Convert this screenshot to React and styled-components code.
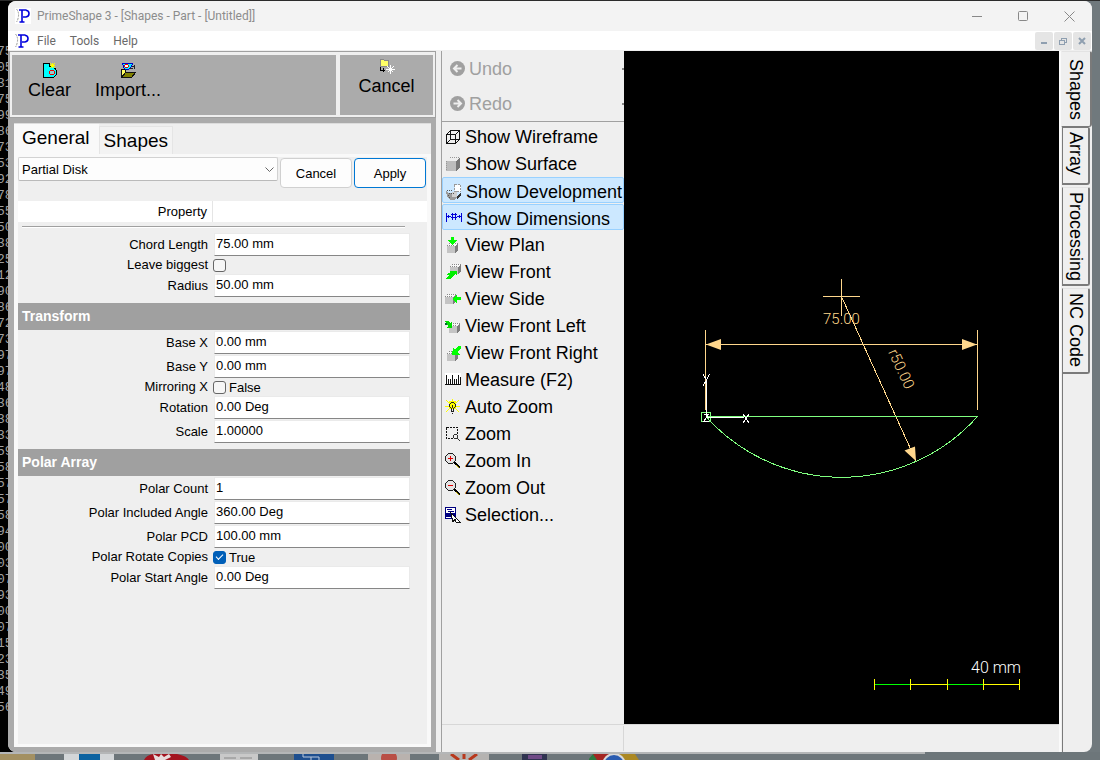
import { useState } from "react";
import styled, { createGlobalStyle, css } from "styled-components";

const GlobalStyle = createGlobalStyle`
  * {
    box-sizing: border-box;
  }
  body {
    margin: 0;
    background: #70797d;
    font-family: "Liberation Sans", Arial, sans-serif;
    color: #000;
  }
  button, input, select {
    font-family: inherit;
    color: inherit;
    margin: 0;
  }
`;

const Desktop = styled.div`
  height: 100vh;
  display: flex;
  flex-direction: column;
  border-top: 1px solid #2b2b2b;
  overflow: hidden;
`;

const DesktopRow = styled.div`
  flex: 1;
  min-height: 0;
  display: flex;
  background: linear-gradient(to right, #000 50%, #70797d 50%);
`;

const Console = styled.div`
  flex: 0 0 8px;
  height: 732px;
  padding-top: 43px;
  overflow: hidden;
  background: #000;
  color: #a0a0a0;
  font-family: "Liberation Mono", monospace;
  font-size: 13px;
  line-height: 16px;
  text-indent: -3px;
  white-space: nowrap;
`;

const Window = styled.div`
  flex: 1;
  min-width: 0;
  display: flex;
  flex-direction: column;
  background: #efefef;
  border-radius: 8px;
  overflow: hidden;
`;

const WallEdge = styled.div`
  flex: 0 0 8px;
  background: #70797d;
`;

const TitleBar = styled.header`
  flex: 0 0 30px;
  display: flex;
  align-items: center;
  padding-left: 7px;
  background: #f3f3f3;
  color: #8c8c8c;
  font-family: Roboto, "Open Sans", sans-serif;
  font-size: 12px;
`;

const TitleText = styled.span`
  flex: 1;
  padding-left: 6px;
`;

const CaptionButton = styled.button`
  width: 46px;
  height: 30px;
  padding: 0;
  border: none;
  background: none;
  display: grid;
  place-items: center;
`;

const MenuBar = styled.nav`
  flex: 0 0 20px;
  display: flex;
  align-items: center;
  padding-left: 6px;
  background: #fff;
  border-bottom: 1px solid #efefef;
  font-family: Roboto, "Open Sans", sans-serif;
`;

const MenuItem = styled.button`
  padding: 0 7px;
  border: none;
  background: none;
  color: #6a6a6a;
  font-size: 12px;
  line-height: 18px;
`;

const Spacer = styled.div`
  flex: 1;
`;

const ChildButton = styled.button`
  width: 18px;
  height: 18px;
  margin-right: 1px;
  padding: 0;
  border: none;
  border-radius: 2px;
  background: #e5e5e5;
  display: grid;
  place-items: center;
`;

const Body = styled.div`
  flex: 1;
  min-height: 0;
  display: flex;
`;

const Dock = styled.aside`
  flex: 0 0 428px;
  display: flex;
  flex-direction: column;
  background: #ababab;
`;

const ActionBar = styled.div`
  height: 67px;
  display: flex;
  gap: 4px;
  padding: 3px 2px 2px;
  background: #efefef;
  border: 1px solid #a0a0a0;
  margin-left: 1px;
`;

const ActionGroup = styled.div`
  flex: ${(p) => (p.$grow ? "1" : "0 0 93px")};
  display: flex;
  justify-content: ${(p) => (p.$grow ? "flex-start" : "center")};
  gap: 8px;
  padding: ${(p) => (p.$grow ? "7px 8px 0" : "3px 0 0")};
  background: #ababab;
`;

const ActionButton = styled.button`
  display: flex;
  flex-direction: column;
  align-items: center;
  align-self: flex-start;
  gap: 1px;
  padding: 0 8px;
  border: none;
  background: none;
  font-size: 18px;
  line-height: 22px;
`;

const DockPage = styled.div`
  flex: 1;
  margin: 5px 5px 5px 6px;
  background: #efefef;
  border-top: 1px solid #dcdcdc;
  display: flex;
  flex-direction: column;
`;

const TabStrip = styled.div`
  display: flex;
  align-items: flex-end;
  height: 30px;
`;

const Tab = styled.button`
  height: ${(p) => (p.$active ? 30 : 28)}px;
  padding: ${(p) => (p.$active ? "0 8px 4px 7px" : "0 4px")};
  background: ${(p) => (p.$active ? "#f9f9f9" : "#f3f3f3")};
  border: 1px solid ${(p) => (p.$active ? "#f9f9f9" : "#e5e5e5")};
  border-bottom: none;
  font-size: 19px;
  line-height: 24px;
`;

const TabPage = styled.div`
  flex: 1;
  border: 3px solid #f9f9f9;
  border-right-width: 4px;
  border-left-width: 4px;
  display: flex;
  flex-direction: column;
`;

const ShapeRow = styled.div`
  display: flex;
  align-items: flex-start;
  gap: 2px;
  padding-right: 1px;
`;

const SelectWrap = styled.div`
  flex: 1;
  position: relative;
`;

const Select = styled.select`
  appearance: none;
  width: 100%;
  height: 24px;
  padding: 0 3px;
  border: 1px solid #d2d2d2;
  border-bottom-color: #bababa;
  border-radius: 2px;
  background: #fdfdfd;
  font-size: 13px;
`;

const Chevron = styled.svg`
  position: absolute;
  right: 4px;
  top: 10px;
  pointer-events: none;
`;

const PushButton = styled.button`
  width: 72px;
  height: 30px;
  margin-top: 1px;
  padding: 0;
  border: 1px solid ${(p) => (p.$primary ? "#0078d4" : "#d0d0d0")};
  border-radius: 4px;
  background: #fdfdfd;
  font-size: 13px;
`;

const GridHeader = styled.div`
  height: 21px;
  margin-top: 13px;
  display: flex;
  background: #fff;
  font-size: 13px;
  line-height: 21px;
`;

const GridHeaderName = styled.span`
  width: 195px;
  padding-right: 5px;
  text-align: right;
  border-right: 1px solid #e5e5e5;
`;

const Rule = styled.div`
  height: 2px;
  margin: 4px 22px 5px 4px;
  background: #fff;
  border-top: 1px solid #a0a0a0;
`;

const Properties = styled.div`
  padding-right: 17px;
  font-size: 13px;
`;

const SectionTitle = styled.h2`
  height: 27px;
  margin: 5px 0 1px;
  padding-left: 4px;
  background: #a0a0a0;
  color: #fff;
  font-size: 14px;
  line-height: 27px;
`;

const Property = styled.div`
  display: grid;
  grid-template-columns: 190px 1fr;
  column-gap: 6px;
  align-items: center;
  height: ${(p) => (p.$check ? 17 : 24)}px;
`;

const PropertyLabel = styled.label`
  padding-bottom: 2px;
  text-align: right;
  white-space: nowrap;
`;

const TextField = styled.input`
  width: 100%;
  height: 23px;
  margin-bottom: 1px;
  padding: 0 1px 2px;
  border: 1px solid #eaeaea;
  border-bottom-color: #868686;
  background: #fff;
  font-size: 13px;
  outline: none;
`;

const CheckCell = styled.div`
  display: flex;
  align-items: center;
  gap: 3px;
  margin-left: -1px;
  padding-bottom: 1px;
`;

const CheckBox = styled.input`
  appearance: none;
  width: 13px;
  height: 13px;
  border: 1px solid #666;
  border-radius: 3px;
  background: #f6f6f6;
  display: grid;
  place-items: center;

  &:checked {
    background: #005fb8;
    border-color: #005fb8;
  }
  &:checked::after {
    content: "";
    width: 6px;
    height: 3px;
    margin-bottom: 2px;
    border-left: 1px solid #fff;
    border-bottom: 1px solid #fff;
    transform: rotate(-45deg);
  }
`;

const Work = styled.main`
  flex: 1;
  min-width: 0;
  margin-left: 5px;
  border-left: 1px solid #a0a0a0;
  display: flex;
  flex-direction: column;
`;

const WorkRow = styled.div`
  flex: 1;
  min-height: 0;
  display: flex;
`;

const ToolBar = styled.div`
  flex: 0 0 182px;
  display: flex;
  flex-direction: column;
`;

const HistoryGroup = styled.div`
  height: 71px;
  border-bottom: 1px solid #a0a0a0;
  margin-bottom: 1px;
`;

const HistoryButton = styled.button`
  width: 100%;
  height: 35px;
  display: flex;
  align-items: center;
  gap: 4px;
  padding: 0 0 0 8px;
  border: none;
  background: none;
  color: #a0a0a0;
  font-size: 18px;
  line-height: 22px;
`;

const DropTick = styled.i`
  width: 2px;
  height: 2px;
  margin-left: auto;
  background: #888;
`;

const ToolButton = styled.button`
  height: 27px;
  display: flex;
  align-items: center;
  gap: 4px;
  padding: 0 0 0 3px;
  border: none;
  background: none;
  font-size: 18px;
  line-height: 22px;
  white-space: nowrap;

  ${(p) =>
    p.$pressed &&
    css`
      height: 26px;
      margin-bottom: 1px;
      padding-top: 3px;
      border: 1px solid #99d1ff;
      border-radius: 2px;
      background: #cce8ff;
    `}
`;

const Viewport = styled.div`
  flex: 1;
  min-width: 0;
  background: #000;
`;

const StatusBar = styled.footer`
  flex: 0 0 28px;
  display: flex;
  padding: 1px 0;
  border-top: 1px solid #d7d7d7;
`;

const StatusPane = styled.div`
  width: 182px;
  border-right: 1px solid #d7d7d7;
`;

const SideTabs = styled.div`
  flex: 0 0 33px;
  display: flex;
  flex-direction: column;
  border-left: 2px solid #fafafa;
`;

const SideTab = styled.button`
  writing-mode: vertical-rl;
  flex: none;
  display: flex;
  align-items: center;
  justify-content: flex-start;
  height: ${(p) => p.$size}px;
  width: 28px;
  padding: ${(p) => (p.$active ? "7px 0" : "4px 0")};
  margin: ${(p) => (p.$active ? "0" : "0 0 2px 1px")};
  border: 1px solid #7a7a7a;
  border-width: 1px 2px 2px 1px;
  border-top-color: ${(p) => (p.$after ? "#7a7a7a" : "#e3e3e3")};
  border-radius: 0 2px 3px 0;
  background: #efefef;
  font-size: 18px;
  line-height: 20px;
  white-space: nowrap;

  ${(p) =>
    p.$active &&
    css`
      width: 31px;
      border-left-color: #efefef;
      border-bottom-width: 1px;
    `}
`;

const SideRail = styled.div`
  flex: 1;
  margin: -2px 0 0 1px;
  border-left: 1px solid #7a7a7a;
`;

const TaskStrip = styled.div`
  flex: 0 0 8px;
  display: flex;
  overflow: hidden;
  background: #6d767a;
  border-top: 2px solid #aeb0b1;
  border-image: linear-gradient(to right, #b4b6b7 84%, #6d767a 84%) 1;
`;

const TaskSlot = styled.div`
  flex: 0 0 75px;
  display: flex;
  justify-content: center;

  &:first-child {
    margin-left: -24px;
  }
`;

const Crisp = ({ size = 16, children }) => (
  <svg
    width={size}
    height={size}
    viewBox={`0 0 ${size} ${size}`}
    shapeRendering="crispEdges"
    fill="none"
    aria-hidden="true"
  >
    {children}
  </svg>
);

const AppIcon = () => (
  <svg width="16" height="16" viewBox="0 0 16 16" fill="none" aria-hidden="true">
    <rect width="16" height="16" fill="#fff" />
    <path d="M1.500 1q2.500 3 2 7q-.5 4-2 6" stroke="#999" strokeDasharray="2 1" />
    <path
      d="M4 2h7.500M7 2v12M4.500 14h5M11 2.200q3 .3 3 3.300t-3 3.500H8"
      stroke="#0000dc"
      strokeWidth="1.600"
    />
  </svg>
);

const Cube = ({ x = 3, y = 5 }) => (
  <g transform={`translate(${x} ${y})`}>
    <path d="M0 3l3-3h8l-3 3z" fill="#f8f8f8" />
    <path d="M0 3h8v7H0z" fill="#c4c4c4" />
    <path d="M8 3l3-3v7l-3 3z" fill="#7c7c7c" />
    <path d="M0 2.500h8M2 .5h9" stroke="#888" strokeDasharray="1 1" />
  </g>
);

const Lens = ({ plus }) => (
  <Crisp>
    <path d="M3 1h5l2 2v5l-2 2H3L1 8V3z" fill="#e4e4e4" />
    <path
      d="M3.500.5h4M3.500 10.500h4M.5 3.500v4M10.500 3.500v4M1.500 2.500l1-1M8.500 1.500l1 1M1.500 8.500l1 1M9.500 8.500l-1 1"
      stroke="#222"
      strokeLinecap="square"
    />
    <path d={plus ? "M5.500 3v5M3 5.500h5" : "M3 5.500h5"} stroke="#e00000" />
    <path d="M9.500 9.500l5.500 5.500" stroke="#000" strokeWidth="2.500" />
    <path d="M11 12l3 3" stroke="#c8b400" />
  </Crisp>
);

const icons = {
  wireframe: (
    <Crisp>
      <path d="M1.500 5.500h9v9h-9zM5.500 1.500h9v9h-9zM1.500 5.500l4-4M10.500 5.500l4-4M1.500 14.500l4-4M10.500 14.500l4-4" stroke="#111" />
    </Crisp>
  ),
  surface: (
    <Crisp>
      <path d="M1 5l4-4h10l-4 4z" fill="#eee" />
      <path d="M1 5h10v10H1z" fill="#bdbdbd" />
      <path d="M11 5l4-4v10l-4 4z" fill="#777" />
      <path d="M5 1.500h10M1.500 5v10" stroke="#999" strokeDasharray="1 1" />
    </Crisp>
  ),
  development: (
    <Crisp>
      <path d="M8.500.5h6v7h-6z" fill="#fff" stroke="#999" strokeDasharray="2 1" />
      <path d="M0 7l3 2h3l2-2h3v6l-3 3H4l-3-3z" fill="#9a9a9a" />
      <path d="M6 8h5v5H6z" fill="#d0d0d0" />
      <path d="M11 13l4-5v3l-4 5z" fill="#333" />
      <path d="M1 6.500h5M3 9.500h5M2 11.500l3 3" stroke="#555" strokeDasharray="1 1" />
    </Crisp>
  ),
  dimensions: (
    <Crisp>
      <path
        d="M.5 2v9M15.500 2v9M1 5.500h4M11 5.500h4M2.500 4v3M13.500 4v3M6.500 2v7M9.500 2v7M5 3.500h6M5 6.500h6"
        stroke="#0000d8"
      />
    </Crisp>
  ),
  plan: (
    <Crisp>
      <Cube x={2} y={6} />
      <path d="M6 0h3v3h3l-4.500 5L3 3h3z" fill="#0f0" />
    </Crisp>
  ),
  front: (
    <Crisp>
      <Cube x={5} y={0} />
      <path d="M4 7h8v4l-2-1-3 4-2 1H1l3-4H1l5-3z" fill="#0e0" />
    </Crisp>
  ),
  side: (
    <Crisp>
      <Cube x={0} y={3} />
      <path d="M8 8l4-5v3h4v3h-4v4z" fill="#0f0" />
    </Crisp>
  ),
  frontLeft: (
    <Crisp>
      <Cube x={4} y={5} />
      <path d="M0 3h3l2 2 2-2v7H1l2-2z" fill="#0d0" />
      <path d="M0 5h2v2H0z" fill="#063" />
    </Crisp>
  ),
  frontRight: (
    <Crisp>
      <Cube x={2} y={6} />
      <path d="M8 3l2 1 4-3h2v2l-3 4 2 3H7z" fill="#0f0" />
    </Crisp>
  ),
  measure: (
    <Crisp>
      <path d="M0 1h16v12H0z" fill="#fff" />
      <path d="M0 12.500h16M1.500 3v9M3.500 7v5M5.500 7v5M7.500 3v9M9.500 7v5M11.500 7v5M13.500 3v9M15.500 5v7" stroke="#111" />
    </Crisp>
  ),
  bulb: (
    <Crisp>
      <path d="M4 2h7v8H4z" fill="#ff0" />
      <path d="M1 1l13 12M14 1L1 13M7.500 0v3M0 7.500h15" stroke="#ff0" />
      <path
        d="M6 3.500h3M4.500 5v3M10.500 5v3M5 4.500h1M9 4.500h1M5 8.500h1M9 8.500h1M6.500 9v3M8.500 9v3M6 12.500h3M7 14.500h1M7.500 6v3"
        stroke="#222"
      />
    </Crisp>
  ),
  zoom: (
    <Crisp>
      <path d="M1.500 1.500h11v11h-11z" stroke="#111" strokeDasharray="2 1" />
      <path d="M8 8h5v5H8z" fill="#efefef" />
      <path d="M9.500 8.500h2l1 1v2l-1 1h-2l-1-1v-2zM12 12l3.500 3.500" stroke="#333" />
    </Crisp>
  ),
  zoomIn: <Lens plus />,
  zoomOut: <Lens />,
  selection: (
    <Crisp>
      <path d="M.5.5h10v11H.5z" fill="#fff" stroke="#000080" />
      <path d="M2 2.500h5M3 4.500h6" stroke="#000080" />
      <path d="M1 6h9v4H1z" fill="#000080" />
      <path d="M6 6l9 9h-4l-1-3-2 3z" fill="#fff" stroke="#111" />
    </Crisp>
  ),
};

const ClearIcon = () => (
  <Crisp>
    <path d="M1.500 1.500h6v3h4l3 4v4l-3 3h-10z" fill="#0ff" stroke="#000" />
    <circle cx="10" cy="10.500" r="2.500" fill="#9cc" stroke="#e00" />
    <path d="M8 3.500h5M10.500 1v5M8 1l5 5M13 1L8 6" stroke="#ff0" />
  </Crisp>
);

const ImportIcon = () => (
  <Crisp>
    <path d="M2.500 1.500h10l-1 3-3 3h-4z" fill="#0ff" stroke="#00c" />
    <circle cx="6.500" cy="4" r="1.800" fill="#fff" stroke="#e00" />
    <path d="M1.500 7.500h3l2 3v5h-5z" fill="#ffff66" stroke="#111" />
    <path d="M5.500 10.500h10l-4 5h-10z" fill="#808000" stroke="#111" />
    <path d="M10 6.500h3M14.500 3v4M12 4.500h2" stroke="#222" />
  </Crisp>
);

const LeaveIcon = () => (
  <Crisp>
    <path d="M1 3V1h3l1 1h4v6H1z" fill="#ff6" stroke="#888" />
    <path d="M1.500 9v3H6M4.500 10v4" stroke="#000" />
    <path d="M7 11.500h9M11.500 7v9M8.500 8.500l6 6M14.500 8.500l-6 6" stroke="#fff" />
  </Crisp>
);

const HistoryIcon = ({ flip }) => (
  <svg width="15" height="15" viewBox="0 0 15 15" fill="none" aria-hidden="true">
    <circle cx="7.500" cy="7.500" r="7.500" fill="#a0a0a0" />
    <path
      d={flip ? "M3.500 7.500h7M7.500 4l3.500 3.500L7.500 11" : "M11.500 7.500h-7M7.500 4L4 7.500 7.500 11"}
      stroke="#efefef"
      strokeWidth="2"
    />
  </svg>
);

const tools = [
  ["wireframe", "Show Wireframe"],
  ["surface", "Show Surface"],
  ["development", "Show Development", true],
  ["dimensions", "Show Dimensions", true],
  ["plan", "View Plan"],
  ["front", "View Front"],
  ["side", "View Side"],
  ["frontLeft", "View Front Left"],
  ["frontRight", "View Front Right"],
  ["measure", "Measure (F2)"],
  ["bulb", "Auto Zoom"],
  ["zoom", "Zoom"],
  ["zoomIn", "Zoom In"],
  ["zoomOut", "Zoom Out"],
  ["selection", "Selection..."],
];

const sections = [
  {
    rows: [
      { label: "Chord Length", value: "75.00 mm" },
      { label: "Leave biggest", checked: false, text: "" },
      { label: "Radius", value: "50.00 mm" },
    ],
  },
  {
    title: "Transform",
    rows: [
      { label: "Base X", value: "0.00 mm" },
      { label: "Base Y", value: "0.00 mm" },
      { label: "Mirroring X", checked: false, text: "False" },
      { label: "Rotation", value: "0.00 Deg" },
      { label: "Scale", value: "1.00000" },
    ],
  },
  {
    title: "Polar Array",
    rows: [
      { label: "Polar Count", value: "1" },
      { label: "Polar Included Angle", value: "360.00 Deg" },
      { label: "Polar PCD", value: "100.00 mm" },
      { label: "Polar Rotate Copies", checked: true, text: "True" },
      { label: "Polar Start Angle", value: "0.00 Deg" },
    ],
  },
];

const consoleLines =
  "75 05 31 75 99 86 73 53 92 78 55 50 38 25 12 90 86 72 73 97 97 48 36 38 33 59 58 57 57 58 94 00 03 07 93 00 07 15 23 35 49 56".split(" ");

const PropertyRow = ({ row }) => {
  const id = row.label.toLowerCase().replace(/ /g, "-");
  const isCheck = row.checked !== undefined;
  return (
    <Property $check={isCheck}>
      <PropertyLabel htmlFor={id}>{row.label}</PropertyLabel>
      {isCheck ? (
        <CheckCell>
          <CheckBox type="checkbox" id={id} defaultChecked={row.checked} />
          {row.text}
        </CheckCell>
      ) : (
        <TextField type="text" id={id} defaultValue={row.value} />
      )}
    </Property>
  );
};

const Drawing = () => (
  <svg width="100%" height="100%" viewBox="624 51 435 673" fill="none" role="img" aria-label="Partial disk">
    <g stroke="#ffd78c" shapeRendering="crispEdges">
      <path d="M841.500 279v37M823 296.500h37M705.500 330v80M977.500 330v80M706 344.500h271" />
    </g>
    <path d="M841.500 296.500L916 461" stroke="#ffd78c" shapeRendering="crispEdges" />
    <path d="M706 344.500l15-5.500v11zM977 344.500l-15-5.500v11zM916 461l-11.500-10.500 10.500-4z" fill="#ffd78c" />
    <g stroke="#80ff80" shapeRendering="crispEdges">
      <path d="M706 416.500h271M701.500 412.500h9v9h-9z" />
      <path d="M706 416.500A182 182 0 0 0 977.500 416.500" />
    </g>
    <g stroke="#fff" shapeRendering="crispEdges">
      <path d="M706.500 379v38M706 417.500h38" />
      <path d="M703 374l3.500 6 3-6M706.500 380l-3.500 6M743 414l6 9M749 414l-6 9M703.500 414.500h5l-5 7h5" />
    </g>
    <g fill="#ffd78c" fontFamily="Roboto, sans-serif" fontWeight="300">
      <text x="823" y="324" fontSize="15">75.00</text>
      <text transform="translate(888 352) rotate(65.500)" fontSize="15">r50.00</text>
    </g>
    <text x="971" y="673" fill="#fff" fontFamily="Roboto, sans-serif" fontWeight="300" fontSize="16">40 mm</text>
    <g shapeRendering="crispEdges">
      <path d="M874 684.500h37M947 684.500h37" stroke="#0f0" />
      <path d="M911 684.500h36M984 684.500h36M874.500 679v11M910.500 679v11M947.500 679v11M983.500 679v11M1019.500 679v11" stroke="#ff0" />
    </g>
  </svg>
);

const taskIcons = [
  <path d="M0 0h46v6H0z" fill="#a39062" key="a" />,
  <path d="M0 0h50v6H0z M15 0h21v6H15z" fill="#d3d6d8" key="b" />,
  <path d="M5 6Q8-1 20 0h18q10 2 12 6z" fill="#a3141f" key="c" />,
  <path d="M6 0h38v6H6z" fill="#c9c9c9" key="d" />,
  <path d="M5 0h40v6H5z" fill="#1e4f8f" key="e" />,
  <path d="M4 0h42v6H4z" fill="#b9b2ae" key="f" />,
  <path d="M0 0h50v6H0z" fill="#b5b3b1" key="g" />,
  <path d="M8 0h25v6H8z" fill="#2f3350" key="h" />,
  <path d="M-1 6l5-6h18v6z" fill="#2d7a41" key="i" />,
];

const taskDetails = {
  1: <path d="M15 0h21v6H15z" fill="#0b62a0" />,
  2: <path d="M14 0l6 3 2-3 3 3 5-3 2 3-6 3H16z" fill="#e8dcdc" />,
  3: <path d="M10 4h12M26 4h12" stroke="#888" />,
  4: <path d="M14 0v3h8v3M30 6V3h-8" stroke="#b8c8dc" fill="none" />,
  5: <circle cx="25" cy="4" r="8" fill="#b94f46" />,
  6: <path d="M12 0l8 6M38 0l-8 6M25 0v5" stroke="#b8381c" strokeWidth="3" />,
  7: <path d="M14 1h14v4H14z" fill="#6f4a86" />,
  8: (
    <>
      <path d="M4 0h24v6H8z" fill="#a32622" />
      <path d="M27 0h19l4 6H27z" fill="#ab8823" />
      <circle cx="25" cy="11" r="12" fill="#d8d8d8" />
      <circle cx="25" cy="11" r="10" fill="#2a5cb0" />
    </>
  ),
};

const App = () => {
  const [shape, setShape] = useState("Partial Disk");

  return (
    <>
      <GlobalStyle />
      <Desktop>
        <DesktopRow>
          <Console>
            {consoleLines.map((line, i) => (
              <div key={i}>{line}</div>
            ))}
          </Console>
          <Window>
            <TitleBar>
              <AppIcon />
              <TitleText>PrimeShape 3 - [Shapes - Part - [Untitled]]</TitleText>
              <CaptionButton aria-label="Minimize">
                <Crisp size={11}>
                  <path d="M0 5.500h10" stroke="#888" />
                </Crisp>
              </CaptionButton>
              <CaptionButton aria-label="Maximize">
                <svg width="11" height="11" fill="none">
                  <rect x=".5" y=".5" width="9" height="9" rx="1" stroke="#888" />
                </svg>
              </CaptionButton>
              <CaptionButton aria-label="Close">
                <svg width="11" height="11" fill="none">
                  <path d="M.5.5l10 10M10.500.5l-10 10" stroke="#888" />
                </svg>
              </CaptionButton>
            </TitleBar>
            <MenuBar>
              <AppIcon />
              <MenuItem>File</MenuItem>
              <MenuItem>Tools</MenuItem>
              <MenuItem>Help</MenuItem>
              <Spacer />
              <ChildButton aria-label="Minimize document">
                <Crisp size={8}>
                  <path d="M1 5h6v2H1z" fill="#8f9fb0" />
                </Crisp>
              </ChildButton>
              <ChildButton aria-label="Restore document">
                <Crisp size={8}>
                  <path d="M2.500 3V1h5v4H6M.5 3.500h5v4h-5z" stroke="#8f9fb0" />
                </Crisp>
              </ChildButton>
              <ChildButton aria-label="Close document">
                <svg width="8" height="8" fill="none">
                  <path d="M1 1l6 6M7 1L1 7" stroke="#8f9fb0" strokeWidth="2" />
                </svg>
              </ChildButton>
            </MenuBar>
            <Body>
              <Dock>
                <ActionBar>
                  <ActionGroup $grow>
                    <ActionButton>
                      <ClearIcon />
                      Clear
                    </ActionButton>
                    <ActionButton>
                      <ImportIcon />
                      Import...
                    </ActionButton>
                  </ActionGroup>
                  <ActionGroup>
                    <ActionButton>
                      <LeaveIcon />
                      Cancel
                    </ActionButton>
                  </ActionGroup>
                </ActionBar>
                <DockPage>
                  <TabStrip>
                    <Tab $active>General</Tab>
                    <Tab>Shapes</Tab>
                  </TabStrip>
                  <TabPage>
                    <ShapeRow>
                      <SelectWrap>
                        <Select
                          aria-label="Shape"
                          value={shape}
                          onChange={(e) => setShape(e.target.value)}
                        >
                          <option>Partial Disk</option>
                        </Select>
                        <Chevron width="9" height="6" fill="none">
                          <path d="M.5.5l4 4 4-4" stroke="#666" />
                        </Chevron>
                      </SelectWrap>
                      <PushButton>Cancel</PushButton>
                      <PushButton $primary>Apply</PushButton>
                    </ShapeRow>
                    <GridHeader>
                      <GridHeaderName>Property</GridHeaderName>
                    </GridHeader>
                    <Rule />
                    <Properties>
                      {sections.map((section, i) => (
                        <section key={i}>
                          {section.title && <SectionTitle>{section.title}</SectionTitle>}
                          {section.rows.map((row) => (
                            <PropertyRow key={row.label} row={row} />
                          ))}
                        </section>
                      ))}
                    </Properties>
                  </TabPage>
                </DockPage>
              </Dock>
              <Work>
                <WorkRow>
                  <ToolBar>
                    <HistoryGroup>
                      <HistoryButton>
                        <HistoryIcon />
                        Undo
                        <DropTick />
                      </HistoryButton>
                      <HistoryButton>
                        <HistoryIcon flip />
                        Redo
                        <DropTick />
                      </HistoryButton>
                    </HistoryGroup>
                    {tools.map(([icon, label, pressed]) => (
                      <ToolButton key={label} $pressed={pressed}>
                        {icons[icon]}
                        {label}
                      </ToolButton>
                    ))}
                  </ToolBar>
                  <Viewport>
                    <Drawing />
                  </Viewport>
                </WorkRow>
                <StatusBar>
                  <StatusPane />
                </StatusBar>
              </Work>
              <SideTabs>
                <SideTab $size={76} $active>
                  Shapes
                </SideTab>
                <SideTab $size={58} $after>
                  Array
                </SideTab>
                <SideTab $size={99}>Processing</SideTab>
                <SideTab $size={86}>NC Code</SideTab>
                <SideRail />
              </SideTabs>
            </Body>
          </Window>
          <WallEdge />
        </DesktopRow>
        <TaskStrip>
          {taskIcons.map((icon, i) => (
            <TaskSlot key={i}>
              <svg width="50" height="6" aria-hidden="true">
                {icon}
                {taskDetails[i]}
              </svg>
            </TaskSlot>
          ))}
        </TaskStrip>
      </Desktop>
    </>
  );
};

export default App;
